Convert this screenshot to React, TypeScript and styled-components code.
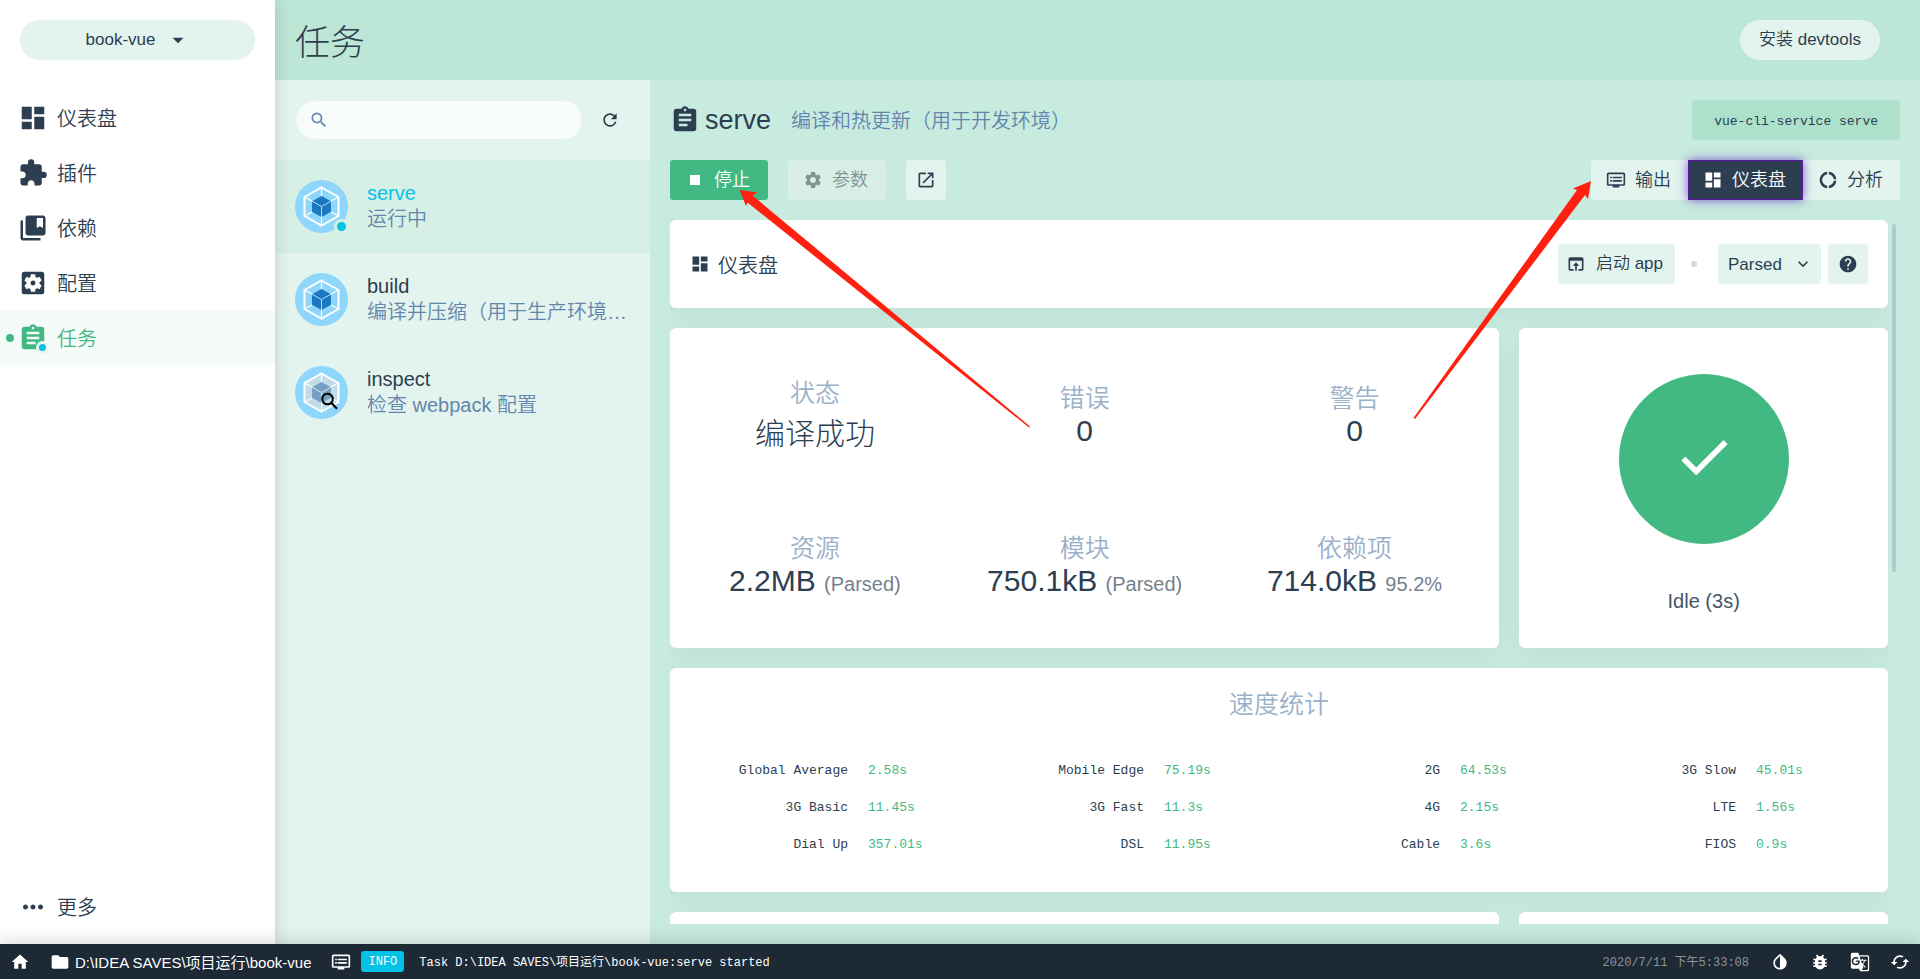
import React from 'react';
import styled, { createGlobalStyle, css } from 'styled-components';
import {
  MdDashboard, MdExtension, MdCollectionsBookmark, MdSettingsApplications, MdAssignment,
  MdMoreHoriz, MdSearch, MdRefresh, MdStop, MdSettings, MdOpenInNew, MdDvr, MdDonutLarge,
  MdOpenInBrowser, MdKeyboardArrowDown, MdHelp, MdHome, MdFolder, MdInvertColors,
  MdBugReport, MdGTranslate, MdCached, MdArrowDropDown,
} from 'react-icons/md';

const c = {
  dark: '#2c3e50',
  darker: '#1d2935',
  primary: '#42b983',
  info: '#03c2e6',
  muted: '#6485ad',
  faint: '#9bb0ca',
  light: '#e3f4ee',
  selected: '#d7f0e6',
  content: '#c8ebdf',
  header: '#bce6d6',
  code: '#aee1cc',
};
const mono = '"Liberation Mono", "Noto Sans CJK SC", monospace';

const GlobalStyle = createGlobalStyle`
  *, *::before, *::after { box-sizing: border-box; }
  html, body { margin: 0; }
  body, button, input, select {
    font-family: "Liberation Sans", "Noto Sans CJK SC", sans-serif;
    font-weight: 350;
    color: ${c.dark};
  }
  body { font-size: 20px; }
  h1, h2, h3, p, ul, dl, dd { margin: 0; padding: 0; font-weight: 350; }
  ul { list-style: none; }
  button { border: 0; line-height: 20px; cursor: pointer; }
  svg { display: block; flex: none; }
`;

const Page = styled.div`
  position: relative;
  display: grid;
  grid-template: minmax(0, 1fr) 35px / 275px minmax(0, 1fr);
  height: 100vh;
  overflow: hidden;
`;

const Sidebar = styled.nav`
  z-index: 1;
  display: flex;
  flex-direction: column;
  padding: 20px 0 10px;
  background: #fff;
  box-shadow: 0 0 15px rgba(0, 0, 0, 0.15);
`;

const PillButton = styled.button`
  display: flex;
  align-items: center;
  justify-content: center;
  gap: 10px;
  height: 40px;
  padding: 0 19px;
  border-radius: 20px;
  background: ${c.light};
  font-size: 17px;
`;

const ProjectButton = styled(PillButton)`
  margin: 0 20px 30px;
  padding: 0 18px 0 20px;
`;

const NavList = styled.ul`
  flex: 1;
`;

const NavLink = styled.a<{ $active?: boolean }>`
  position: relative;
  display: flex;
  align-items: center;
  gap: 9px;
  height: 55px;
  padding-left: 18px;
  color: ${c.dark};
  text-decoration: none;
  ${p => p.$active && css`
    color: ${c.primary};
    background: #f5fbf8;
    &::before {
      content: '';
      position: absolute;
      left: 6px;
      width: 8px;
      height: 8px;
      border-radius: 50%;
      background: ${c.primary};
    }
  `}
`;

const IconSlot = styled.span`
  position: relative;
  flex: none;
`;

const StatusDot = styled.i<{ $size: number; $ring: string }>`
  position: absolute;
  right: -1px;
  bottom: -1px;
  width: ${p => p.$size}px;
  height: ${p => p.$size}px;
  border: 3px solid ${p => p.$ring};
  border-radius: 50%;
  background: ${c.info};
`;

const View = styled.div`
  display: flex;
  flex-direction: column;
  min-height: 0;
`;

const ViewHeader = styled.header`
  display: flex;
  flex: none;
  align-items: center;
  justify-content: space-between;
  height: 80px;
  padding: 0 40px 0 20px;
  background: ${c.header};
`;

const ViewTitle = styled.h1`
  padding-top: 6px;
  font-size: 35px;
  font-weight: 300;
  line-height: 40px;
`;

const ViewBody = styled.div`
  display: grid;
  flex: 1;
  grid-template-columns: 375px minmax(0, 1fr);
  min-height: 0;
`;

const TaskPane = styled.section`
  background: ${c.light};
`;

const TaskToolbar = styled.div`
  display: flex;
  align-items: center;
  gap: 18px;
  height: 80px;
  padding: 0 30px 0 21px;
`;

const SearchBox = styled.label`
  display: flex;
  flex: 1;
  align-items: center;
  gap: 8px;
  height: 38px;
  padding: 0 13px;
  border-radius: 19px;
  background: #f7fbfa;
  color: ${c.muted};
  input {
    flex: 1;
    min-width: 0;
    border: 0;
    outline: 0;
    background: transparent;
    font-size: 17px;
  }
`;

const RefreshButton = styled.button`
  padding: 0;
  background: transparent;
`;

const TaskLink = styled.a<{ $selected?: boolean }>`
  display: flex;
  align-items: center;
  gap: 19px;
  height: 93px;
  padding: 0 20px;
  background: ${p => (p.$selected ? c.selected : 'transparent')};
  color: ${c.dark};
  text-decoration: none;
`;

const TaskText = styled.span`
  min-width: 0;
  padding-bottom: 2px;
  line-height: 26px;
`;

const TaskName = styled.span<{ $running?: boolean }>`
  display: block;
  color: ${p => (p.$running ? c.info : c.dark)};
`;

const TaskInfo = styled.span`
  display: block;
  overflow: hidden;
  color: ${c.muted};
  white-space: nowrap;
`;

const Detail = styled.main`
  display: flex;
  flex-direction: column;
  gap: 20px;
  min-height: 0;
  padding: 20px;
  background: ${c.content};
`;

const Bar = styled.div`
  display: flex;
  flex: none;
  align-items: center;
  justify-content: space-between;
  height: 40px;
`;

const Group = styled.div<{ $gap: number }>`
  display: flex;
  align-items: center;
  gap: ${p => p.$gap}px;
`;

const TaskTitle = styled.h2`
  display: flex;
  align-items: center;
  gap: 5px;
  font-size: 27px;
  line-height: 38px;
`;

const TaskDescription = styled.p`
  padding-top: 2px;
  color: ${c.muted};
  line-height: 38px;
`;

const Command = styled.code`
  padding: 4px 22px 0;
  border-radius: 3px;
  background: ${c.code};
  font: 13px/36px ${mono};
`;

const Button = styled.button<{ $primary?: boolean }>`
  display: flex;
  align-items: center;
  gap: 9px;
  height: 40px;
  padding: 0 18px 0 15px;
  border-radius: 3px;
  background: ${p => (p.$primary ? c.primary : c.light)};
  color: ${p => (p.$primary ? '#fff' : c.dark)};
  font-size: 18px;
  white-space: nowrap;
  &:disabled {
    background: #d9eee7;
    color: #7f9594;
  }
`;

const IconButton = styled(Button)`
  justify-content: center;
  width: 40px;
  padding: 0;
`;

const LaunchButton = styled(Button)`
  gap: 10px;
  padding: 0 12px 0 8px;
  font-size: 17px;
`;

const Tabs = styled.div`
  display: flex;
`;

const Tab = styled(Button)<{ $active?: boolean }>`
  padding-right: 17px;
  border-radius: 0;
  &:first-child { border-radius: 3px 0 0 3px; }
  &:last-child { border-radius: 0 3px 3px 0; }
  ${p => p.$active && css`
    z-index: 1;
    background: ${c.dark};
    color: #fff;
    box-shadow: inset 0 0 0 1px #5a17a8, 0 0 10px rgba(90, 30, 190, 0.7);
  `}
`;

const ScrollFrame = styled.div`
  display: flex;
  flex: 1;
  min-height: 0;
`;

const Cards = styled.div`
  display: grid;
  flex: 1;
  align-content: start;
  grid-template-columns: minmax(0, 9fr) minmax(0, 4fr);
  gap: 20px;
  overflow: hidden;
`;

const ScrollTrack = styled.div`
  width: 12px;
  padding: 4px;
`;

const ScrollThumb = styled.div`
  height: 50%;
  border-radius: 2px;
  background: #b5c8d1;
`;

const Card = styled.section<{ $wide?: boolean }>`
  grid-column: ${p => (p.$wide ? '1 / -1' : 'auto')};
  border-radius: 6px;
  background: #fff;
  box-shadow: 0 6px 25px rgba(0, 0, 0, 0.05);
`;

const DashboardBar = styled(Card)`
  display: flex;
  align-items: center;
  justify-content: space-between;
  height: 88px;
  padding: 0 20px;
`;

const DashboardTitle = styled.h3`
  display: flex;
  align-items: center;
  gap: 8px;
  font-size: 20px;
`;

const Separator = styled.i`
  width: 6px;
  height: 6px;
  margin: 0 21px 0 16px;
  border-radius: 50%;
  background: #d5d8dc;
`;

const SelectBox = styled.span`
  position: relative;
  margin-right: 7px;
  select {
    width: 103px;
    height: 40px;
    padding: 0 10px;
    border: 0;
    border-radius: 3px;
    background: ${c.light};
    font-size: 17px;
    appearance: none;
  }
  svg {
    position: absolute;
    top: 10px;
    right: 8px;
    pointer-events: none;
  }
`;

const StatsCard = styled(Card)`
  display: grid;
  grid-template-columns: repeat(3, minmax(0, 1fr));
  grid-auto-rows: 150px;
  padding: 10px;
`;

const Stat = styled.div`
  display: flex;
  flex-direction: column;
  align-items: center;
  justify-content: center;
  padding-bottom: 1px;
`;

const StatLabel = styled.div`
  color: ${c.faint};
  font-size: 25px;
`;

const StatValue = styled.div`
  font-size: 30px;
  font-weight: 300;
  white-space: nowrap;
  small {
    color: #75818d;
    font-size: 20px;
  }
`;

const StatusCard = styled(Card)`
  display: flex;
  flex-direction: column;
  align-items: center;
  gap: 46px;
  padding-top: 46px;
`;

const StatusDisc = styled.div`
  display: grid;
  place-items: center;
  width: 170px;
  height: 170px;
  padding-bottom: 4px;
  border-radius: 50%;
  background: ${c.primary};
  color: #fff;
`;

const StatusText = styled.p`
  color: #45566a;
`;

const SpeedCard = styled(Card)`
  height: 224px;
  padding: 16px 17px;
`;

const SpeedTitle = styled.h3`
  color: ${c.faint};
  font-size: 25px;
  line-height: 40px;
  text-align: center;
`;

const SpeedGrid = styled.dl`
  display: grid;
  grid-template-columns: repeat(4, minmax(0, 1fr));
  padding-top: 28px;
  font: 13px/37px ${mono};
`;

const SpeedItem = styled.div`
  display: grid;
  grid-template-columns: 7fr 5fr;
  column-gap: 20px;
  dt { text-align: right; }
  dd { color: ${c.primary}; }
`;

const PendingCard = styled(Card)`
  height: 320px;
`;

const StatusBar = styled.footer`
  z-index: 2;
  display: flex;
  grid-column: 1 / -1;
  align-items: center;
  background: ${c.darker};
  color: #fff;
  box-shadow: 0 0 20px rgba(0, 0, 0, 0.2);
`;

const BarButton = styled.button`
  display: grid;
  place-items: center;
  width: 40px;
  height: 35px;
  padding: 0;
  background: transparent;
  color: #fff;
`;

const ProjectPath = styled.span`
  display: flex;
  align-items: center;
  gap: 5px;
  margin: 0 20px 0 10px;
  font-size: 15px;
  font-weight: 400;
`;

const LogEntry = styled.span`
  display: flex;
  flex: 1;
  align-items: center;
  font: 12px/21px ${mono};
`;

const LogType = styled.span`
  margin: 0 15px 0 10px;
  padding: 1px 7px 0;
  border-radius: 3px;
  background: ${c.info};
  line-height: 20px;
`;

const LogMessage = styled.span`
  padding-top: 4px;
`;

const LogDate = styled.time`
  margin-right: 11px;
  padding-top: 4px;
  color: #8e949a;
  font: 12px/21px ${mono};
`;

const Annotations = styled.svg`
  position: absolute;
  top: 0;
  left: 0;
  z-index: 3;
  pointer-events: none;
`;

function CheckMark() {
  return (
    <svg width="62" height="62" viewBox="0 0 24 24" fill="currentColor" stroke="currentColor" strokeWidth="0.3">
      <path d="M9 16.2 4.8 12l-1.4 1.400L9 19 21 7l-1.400-1.400z" />
    </svg>
  );
}

function WebpackLogo({ inspect }: { inspect?: boolean }) {
  return (
    <svg width="53" height="53" viewBox="0 0 53 53" fill="none">
      <circle cx="26.5" cy="26.5" r="26.5" fill="#8ed6fb" />
      <path d="M26.5 7.5 43.5 17v19L26.5 45.5 9.5 36V17z" fill={inspect ? '#c2dbe8' : '#8ed6fb'} stroke="#fff" strokeWidth="2" />
      <path d="M26.5 7.5V16M43.5 17 36 21M43.5 36 36 32M26.5 45.5V37M9.5 36 17 32M9.5 17 17 21" stroke="#fff" strokeWidth="1.2" />
      <path d="M26.5 16 36 21.2v10.6L26.5 37 17 31.8V21.2z" fill={inspect ? '#759fc3' : '#1c78c0'} />
      <path d="M17 21.2 26.5 26.5 36 21.2M26.5 26.5V37" stroke={inspect ? '#d6e6ef' : '#b4def5'} strokeWidth="1" />
      {inspect && (
        <g stroke="#000" strokeWidth="2">
          <circle cx="32.500" cy="33" r="5.300" />
          <path d="m36.300 36.800 5.700 6" />
        </g>
      )}
    </svg>
  );
}

const navItems = [
  { label: '仪表盘', Icon: MdDashboard },
  { label: '插件', Icon: MdExtension },
  { label: '依赖', Icon: MdCollectionsBookmark },
  { label: '配置', Icon: MdSettingsApplications },
  { label: '任务', Icon: MdAssignment, active: true },
];

const tasks = [
  { name: 'serve', info: '运行中', running: true },
  { name: 'build', info: '编译并压缩（用于生产环境…' },
  { name: 'inspect', info: '检查 webpack 配置', inspect: true },
];

const stats = [
  { label: '状态', value: '编译成功' },
  { label: '错误', value: '0' },
  { label: '警告', value: '0' },
  { label: '资源', value: '2.2MB', note: '(Parsed)' },
  { label: '模块', value: '750.1kB', note: '(Parsed)' },
  { label: '依赖项', value: '714.0kB', note: '95.2%' },
];

const speeds = [
  ['Global Average', '2.58s'], ['Mobile Edge', '75.19s'], ['2G', '64.53s'], ['3G Slow', '45.01s'],
  ['3G Basic', '11.45s'], ['3G Fast', '11.3s'], ['4G', '2.15s'], ['LTE', '1.56s'],
  ['Dial Up', '357.01s'], ['DSL', '11.95s'], ['Cable', '3.6s'], ['FIOS', '0.9s'],
];

export default function App() {
  return (
    <Page>
      <GlobalStyle />
      <Sidebar>
        <ProjectButton>book-vue <MdArrowDropDown size={26} /></ProjectButton>
        <NavList>
          {navItems.map(({ label, Icon, active }) => (
            <li key={label}>
              <NavLink href="#" $active={active}>
                <IconSlot>
                  <Icon size={30} />
                  {active && <StatusDot $size={13} $ring="#e9f7f3" />}
                </IconSlot>
                {label}
              </NavLink>
            </li>
          ))}
        </NavList>
        <NavLink href="#"><MdMoreHoriz size={30} />更多</NavLink>
      </Sidebar>

      <View>
        <ViewHeader>
          <ViewTitle>任务</ViewTitle>
          <PillButton>安装 devtools</PillButton>
        </ViewHeader>
        <ViewBody>
          <TaskPane>
            <TaskToolbar>
              <SearchBox>
                <MdSearch size={20} />
                <input type="search" aria-label="搜索" />
              </SearchBox>
              <RefreshButton aria-label="刷新"><MdRefresh size={20} /></RefreshButton>
            </TaskToolbar>
            <ul>
              {tasks.map(t => (
                <li key={t.name}>
                  <TaskLink href="#" $selected={t.running}>
                    <IconSlot>
                      <WebpackLogo inspect={t.inspect} />
                      {t.running && <StatusDot $size={15} $ring="#d7f0e6" />}
                    </IconSlot>
                    <TaskText>
                      <TaskName $running={t.running}>{t.name}</TaskName>
                      <TaskInfo>{t.info}</TaskInfo>
                    </TaskText>
                  </TaskLink>
                </li>
              ))}
            </ul>
          </TaskPane>

          <Detail>
            <Bar>
              <Group $gap={20}>
                <TaskTitle><MdAssignment size={30} />serve</TaskTitle>
                <TaskDescription>编译和热更新（用于开发环境）</TaskDescription>
              </Group>
              <Command>vue-cli-service serve</Command>
            </Bar>
            <Bar>
              <Group $gap={20}>
                <Button $primary><MdStop size={20} />停止</Button>
                <Button disabled><MdSettings size={20} />参数</Button>
                <IconButton aria-label="打开"><MdOpenInNew size={20} /></IconButton>
              </Group>
              <Tabs role="tablist">
                <Tab role="tab"><MdDvr size={20} />输出</Tab>
                <Tab role="tab" aria-selected $active><MdDashboard size={20} />仪表盘</Tab>
                <Tab role="tab"><MdDonutLarge size={20} />分析</Tab>
              </Tabs>
            </Bar>
            <ScrollFrame>
              <Cards>
                <DashboardBar $wide>
                  <DashboardTitle><MdDashboard size={20} />仪表盘</DashboardTitle>
                  <Group $gap={0}>
                    <LaunchButton><MdOpenInBrowser size={20} />启动 app</LaunchButton>
                    <Separator />
                    <SelectBox>
                      <select aria-label="Size" defaultValue="Parsed"><option>Parsed</option></select>
                      <MdKeyboardArrowDown size={20} />
                    </SelectBox>
                    <IconButton aria-label="帮助"><MdHelp size={20} /></IconButton>
                  </Group>
                </DashboardBar>
                <StatsCard>
                  {stats.map(s => (
                    <Stat key={s.label}>
                      <StatLabel>{s.label}</StatLabel>
                      <StatValue>{s.value}{s.note && <> <small>{s.note}</small></>}</StatValue>
                    </Stat>
                  ))}
                </StatsCard>
                <StatusCard>
                  <StatusDisc><CheckMark /></StatusDisc>
                  <StatusText>Idle (3s)</StatusText>
                </StatusCard>
                <SpeedCard $wide>
                  <SpeedTitle>速度统计</SpeedTitle>
                  <SpeedGrid>
                    {speeds.map(([name, time]) => (
                      <SpeedItem key={name}><dt>{name}</dt><dd>{time}</dd></SpeedItem>
                    ))}
                  </SpeedGrid>
                </SpeedCard>
                <PendingCard />
                <PendingCard />
              </Cards>
              <ScrollTrack><ScrollThumb /></ScrollTrack>
            </ScrollFrame>
          </Detail>
        </ViewBody>
      </View>

      <StatusBar>
        <BarButton aria-label="主页"><MdHome size={20} /></BarButton>
        <ProjectPath><MdFolder size={20} />D:\IDEA SAVES\项目运行\book-vue</ProjectPath>
        <LogEntry>
          <MdDvr size={20} />
          <LogType>INFO</LogType>
          <LogMessage>Task D:\IDEA SAVES\项目运行\book-vue:serve started</LogMessage>
        </LogEntry>
        <LogDate>2020/7/11 下午5:33:08</LogDate>
        <BarButton aria-label="主题"><MdInvertColors size={20} /></BarButton>
        <BarButton aria-label="报告问题"><MdBugReport size={20} /></BarButton>
        <BarButton aria-label="翻译"><MdGTranslate size={20} /></BarButton>
        <BarButton aria-label="刷新"><MdCached size={20} /></BarButton>
      </StatusBar>

      <Annotations width="1920" height="979" viewBox="0 0 1920 979" fill="#ff2010" aria-hidden="true">
        <path d="M739.500 190 757.500 192.500 752.500 195.500 1030 426.500 1029 427.500 747.500 202.500 746 206z" />
        <path d="M1591 181 1588 199 1585 195 1415 419 1413.500 418 1577 190 1573 188.500z" />
      </Annotations>
    </Page>
  );
}
